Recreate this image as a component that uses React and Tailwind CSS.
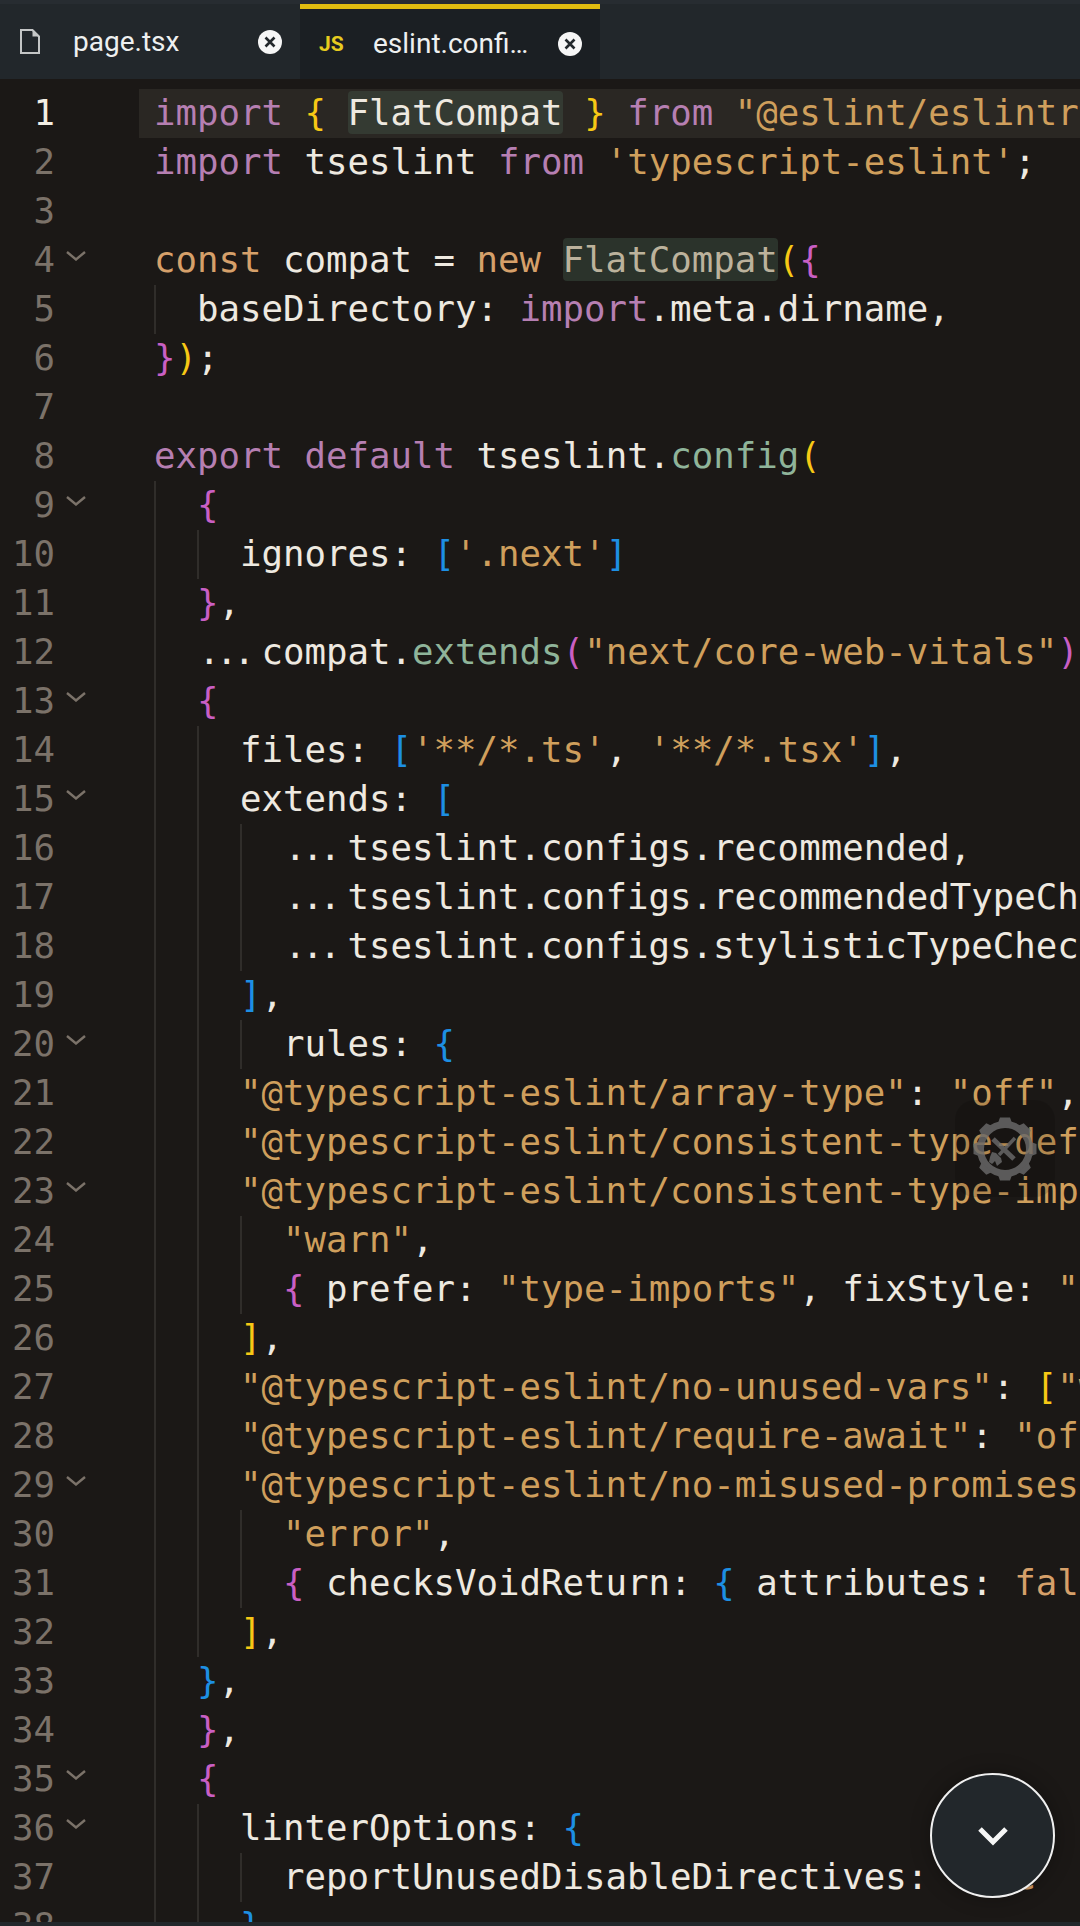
import React from 'react';

const k = 'text-[#b67fb2]';
const s = 'text-[#cf9f5c]';
const w = 'text-[#eee9e0]';
const d = 'text-[#d6a06a]';
const f = 'text-[#8fb49a]';
const p = 'text-[#c95fc4]';
const y = 'text-[#f7c815]';
const b = 'text-[#1d8fe3]';

const str = (t) => [s, t];
const pre = (t) => [w, t];
const dots = ['dots', '...'];

// each line: tokens, fold chevron, indent guides
const lines = [
  { t: [[k, 'import'], [w, ' '], [y, '{'], [w, ' '], ['hl', 'FlatCompat'], [w, ' '], [y, '}'], [w, ' '], [k, 'from'], [w, ' '], str('"@eslint/eslintrc"'), [w, ';']] },
  { t: [[k, 'import'], [w, ' tseslint '], [k, 'from'], [w, ' '], str("'typescript-eslint'"), [w, ';']] },
  { t: [] },
  { t: [[d, 'const'], [w, ' compat = '], [d, 'new'], [w, ' '], ['hl2', 'FlatCompat'], [y, '('], [p, '{']], fold: true },
  { t: [pre('  baseDirectory: '), [k, 'import'], [w, '.meta.dirname,']], g: [0] },
  { t: [[p, '}'], [y, ')'], [w, ';']] },
  { t: [] },
  { t: [[k, 'export'], [w, ' '], [k, 'default'], [w, ' tseslint.'], [f, 'config'], [y, '(']] },
  { t: [[w, '  '], [p, '{']], fold: true, g: [0] },
  { t: [pre('    ignores: '), [b, '['], str("'.next'"), [b, ']']], g: [0, 1] },
  { t: [[w, '  '], [p, '}'], [w, ',']], g: [0] },
  { t: [pre('  '), dots, pre('compat.'), [f, 'extends'], [p, '('], str('"next/core-web-vitals"'), [p, ')'], [w, ',']], g: [0] },
  { t: [[w, '  '], [p, '{']], fold: true, g: [0] },
  { t: [pre('    files: '), [b, '['], str("'**/*.ts'"), [w, ', '], str("'**/*.tsx'"), [b, ']'], [w, ',']], g: [0, 1] },
  { t: [pre('    extends: '), [b, '[']], fold: true, g: [0, 1] },
  { t: [pre('      '), dots, pre('tseslint.configs.recommended,')], g: [0, 1, 2] },
  { t: [pre('      '), dots, pre('tseslint.configs.recommendedTypeChecked,')], g: [0, 1, 2] },
  { t: [pre('      '), dots, pre('tseslint.configs.stylisticTypeChecked,')], g: [0, 1, 2] },
  { t: [[w, '    '], [b, ']'], [w, ',']], g: [0, 1] },
  { t: [pre('      rules: '), [b, '{']], fold: true, g: [0, 1, 2] },
  { t: [[w, '    '], str('"@typescript-eslint/array-type"'), [w, ': '], str('"off"'), [w, ',']], g: [0, 1] },
  { t: [[w, '    '], str('"@typescript-eslint/consistent-type-definitions"'), [w, ': '], str('"off"'), [w, ',']], g: [0, 1] },
  { t: [[w, '    '], str('"@typescript-eslint/consistent-type-imports"'), [w, ': '], [y, '[']], fold: true, g: [0, 1] },
  { t: [[w, '      '], str('"warn"'), [w, ',']], g: [0, 1, 2] },
  { t: [[w, '      '], [p, '{'], [w, ' prefer: '], str('"type-imports"'), [w, ', fixStyle: '], str('"inline-type-imports"'), [w, ' '], [p, '}'], [w, ',']], g: [0, 1, 2] },
  { t: [[w, '    '], [y, ']'], [w, ',']], g: [0, 1] },
  { t: [[w, '    '], str('"@typescript-eslint/no-unused-vars"'), [w, ': '], [y, '['], str('"warn"'), [y, ']'], [w, ',']], g: [0, 1] },
  { t: [[w, '    '], str('"@typescript-eslint/require-await"'), [w, ': '], str('"off"'), [w, ',']], g: [0, 1] },
  { t: [[w, '    '], str('"@typescript-eslint/no-misused-promises"'), [w, ': '], [y, '[']], fold: true, g: [0, 1] },
  { t: [[w, '      '], str('"error"'), [w, ',']], g: [0, 1, 2] },
  { t: [[w, '      '], [p, '{'], [w, ' checksVoidReturn: '], [b, '{'], [w, ' attributes: '], [d, 'false'], [w, ' '], [b, '}'], [w, ' '], [p, '}'], [w, ',']], g: [0, 1, 2] },
  { t: [[w, '    '], [y, ']'], [w, ',']], g: [0, 1] },
  { t: [[w, '  '], [b, '}'], [w, ',']], g: [0] },
  { t: [[w, '  '], [p, '}'], [w, ',']], g: [0] },
  { t: [[w, '  '], [p, '{']], fold: true, g: [0] },
  { t: [pre('    linterOptions: '), [b, '{']], fold: true, g: [0, 1] },
  { t: [pre('      reportUnusedDisableDirectives: '), [d, 'true']], g: [0, 1, 2] },
  { t: [[w, '    '], [b, '}'], [w, ',']], g: [0, 1] },
];

const guideLeft = ['left-0', 'left-[43px]', 'left-[86px]'];

const Token = ({ cls, text }) => {
  if (cls === 'hl') {
    return <span className="inline-block h-[43px] leading-[43px] rounded-[4px] bg-[#343a32] text-[#eee9e0]">{text}</span>;
  }
  if (cls === 'hl2') {
    return <span className="inline-block h-[43px] leading-[43px] rounded-[4px] bg-[#2b332b] text-[#bcb29c]">{text}</span>;
  }
  if (cls === 'dots') {
    // the reference font draws ... as a tighter ligature
    return <span className="inline-block w-[64.5px] pl-[1.5px] tracking-[-4px] text-[#eee9e0]">{text}</span>;
  }
  return <span className={cls}>{text}</span>;
};

const Chevron = () => (
  <svg width="20" height="10" viewBox="0 0 20 10" fill="none" className="ml-[11px] mb-[10px] shrink-0">
    <polyline points="1,1 10,8.5 19,1" stroke="#7b7269" strokeWidth="2.4" />
  </svg>
);

const CodeLine = ({ n, line, active }) => (
  <div className="flex h-[49px] shrink-0 items-center">
    <div className="flex w-[139px] shrink-0 items-center">
      <span className={`mb-[2px] w-[55px] text-right ${active ? 'text-[#f3eee4]' : 'text-[#7b7269]'}`}>{n}</span>
      {line.fold && <Chevron />}
    </div>
    <div className={`flex h-[49px] min-w-0 flex-1 items-center pl-[15px] ${active ? 'bg-[#2a2723]' : ''}`}>
      <div className="relative h-[49px] flex-1 overflow-hidden whitespace-pre leading-[47px]">
        {(line.g || []).map((g) => (
          <div key={g} className={`absolute top-0 bottom-0 w-[2px] bg-[#302d2a] ${guideLeft[g]}`} />
        ))}
        {line.t.map((tok, i) => (
          <Token key={i} cls={tok[0]} text={tok[1]} />
        ))}
      </div>
    </div>
  </div>
);

const CloseDot = () => (
  <svg width="24" height="24" viewBox="0 0 24 24" className="shrink-0">
    <circle cx="12" cy="12" r="12" fill="#f6f6f6" />
    <path d="M7.5 7.5l9 9M16.5 7.5l-9 9" stroke="#22272b" strokeWidth="2.6" />
  </svg>
);

const GearTools = () => (
  <svg width="64" height="64" viewBox="0 0 64 64" fill="none" className="opacity-80">
    <circle cx="32" cy="32" r="24.5" stroke="#6c6c6c" strokeWidth="7" />
    {[0, 45, 90, 135, 180, 225, 270, 315].map((a) => (
      <path key={a} d="M25 6L27 0.5h10L39 6z" fill="#6c6c6c" transform={`rotate(${a} 32 32)`} />
    ))}
    {/* wrench running to the lower right */}
    <path d="M20 22l21 20" stroke="#6c6c6c" strokeWidth="5" />
    {/* fork head, lower left, and handle to the upper right */}
    <path d="M26 38l16-17" stroke="#6c6c6c" strokeWidth="3.5" />
    <path d="M19 35l4 1 5 5 1 4-5 4-2-5-3 3-3-2 1-5z" fill="#6c6c6c" />
  </svg>
);

export default function App() {
  return (
    <div className="flex h-[1926px] w-[1080px] flex-col overflow-hidden bg-[#1b1816]">
      <div className="h-[4px] shrink-0 bg-[#272c31]" />
      <div className="flex h-[75px] shrink-0 bg-[#22272b] font-['Roboto',sans-serif] text-[28px] text-[#eef0f0]">
        <div className="flex w-[300px] items-center pl-[20px]">
          <svg width="20" height="25" viewBox="0 0 20 25" fill="none" className="shrink-0">
            <path d="M1 1h11.5L19 7.5V24H1z" stroke="#c4c6c6" strokeWidth="2" />
            <path d="M12.5 1v6.5H19" fill="#c4c6c6" />
          </svg>
          <span className="ml-[33px] w-[185px]">page.tsx</span>
          <CloseDot />
        </div>
        <div className="flex w-[300px] items-center border-t-[5px] border-[#e0bd10] bg-[#1b1f23] pl-[19px]">
          <span className="mt-[2px] w-[54px] text-[21px] font-bold text-[#e6cb1f]">JS</span>
          <span className="w-[185px]">eslint.confi…</span>
          <CloseDot />
        </div>
      </div>
      <div className="flex min-h-0 flex-1 flex-col overflow-hidden pt-[10px] font-['DejaVu_Sans_Mono',monospace] text-[35.72px] leading-[49px]">
        {lines.map((line, i) => (
          <CodeLine key={i} n={i + 1} line={line} active={i === 0} />
        ))}
      </div>
      <div className="h-[4px] shrink-0 bg-[#22272b]" />

      {/* floating buttons */}
      <div className="absolute left-[955px] top-[1100px] flex h-[97px] w-[100px] items-center justify-center rounded-[20px] bg-[#00000024] pt-[1px]">
        <GearTools />
      </div>
      <div className="absolute left-[930px] top-[1773px] flex h-[125px] w-[125px] items-center justify-center rounded-full border-2 border-[#f0f0f0] bg-[#22272b] shadow-[0_0_20px_rgba(0,0,0,0.3)]">
        <svg width="30" height="20" viewBox="0 0 30 20" fill="none">
          <path d="M2 3l13 13L28 3" stroke="#f6f6f6" strokeWidth="5" />
        </svg>
      </div>
    </div>
  );
}
